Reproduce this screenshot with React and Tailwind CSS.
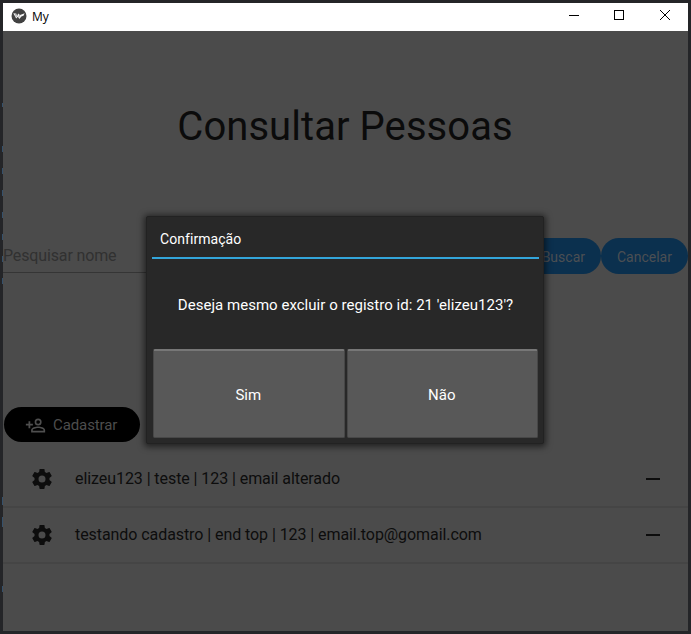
import React from "react";

const people = [
  "elizeu123 | teste | 123 | email alterado",
  "testando cadastro | end top | 123 | email.top@gomail.com",
];

// Slivers of the editor that show past the window's left border.
const specks = [
  { top: 103, height: 4 },
  { top: 146, height: 6 },
  { top: 168, height: 6 },
  { top: 190, height: 6 },
  { top: 212, height: 6 },
  { top: 234, height: 6 },
  { top: 256, height: 6 },
  { top: 278, height: 6 },
  { top: 497, height: 8 },
  { top: 517, height: 10 },
  { top: 586, height: 6 },
];

function TitleBar() {
  return (
    <header className="flex h-7 items-center bg-white pl-2">
      <svg width="16" height="16" viewBox="0 0 16 16" className="relative -top-px">
        <circle cx="8" cy="8" r="7.5" fill="#414141" />
        <path d="M2.3 5.2 5.2 5.6 6.1 8 7.2 5.6 9 7 13.7 5.2 12.5 7.7 10.4 8.5 8.4 11 6.8 8.8 5.2 10.5Z" fill="#f4f4f4" />
        <path d="M4.3 5.4 5.4 9M8.8 7.2 7.6 9.2" stroke="#777" strokeWidth=".6" />
      </svg>
      <span className="ml-[5px] -mt-px font-['Open_Sans',sans-serif] text-[12px] leading-4 text-black">My</span>
      <svg className="ml-auto" width="138" height="28" viewBox="0 0 138 28" fill="none" stroke="#000" shapeRendering="crispEdges">
        <path d="M19 12.5H29" />
        <rect x="64.5" y="7.5" width="9" height="9" />
        <path d="M110 7 120 17M120 7 110 17" shapeRendering="auto" />
      </svg>
    </header>
  );
}

function Gear() {
  return (
    <svg width="24" height="24" viewBox="0 0 24 24" fill="#0d0d0d" className="-ml-px mr-px">
      <path d="M12,15.5A3.5,3.5 0 0,1 8.5,12A3.5,3.5 0 0,1 12,8.5A3.5,3.5 0 0,1 15.5,12A3.5,3.5 0 0,1 12,15.5M19.43,12.97C19.47,12.65 19.5,12.33 19.5,12C19.5,11.67 19.47,11.34 19.43,11L21.54,9.37C21.73,9.22 21.78,8.95 21.66,8.73L19.66,5.27C19.54,5.05 19.27,4.96 19.05,5.05L16.56,6.05C16.04,5.66 15.5,5.32 14.87,5.07L14.5,2.42C14.46,2.18 14.25,2 14,2H10C9.75,2 9.54,2.18 9.5,2.42L9.13,5.07C8.5,5.32 7.96,5.66 7.44,6.05L4.95,5.05C4.73,4.96 4.46,5.05 4.34,5.27L2.34,8.73C2.21,8.95 2.27,9.22 2.46,9.37L4.57,11C4.53,11.34 4.5,11.67 4.5,12C4.5,12.33 4.53,12.65 4.57,12.97L2.46,14.63C2.27,14.78 2.21,15.05 2.34,15.27L4.34,18.73C4.46,18.95 4.73,19.03 4.95,18.95L7.44,17.94C7.96,18.34 8.5,18.68 9.13,18.93L9.5,21.58C9.54,21.82 9.75,22 10,22H14C14.25,22 14.46,21.82 14.5,21.58L14.87,18.93C15.5,18.67 16.04,18.34 16.56,17.94L19.05,18.95C19.27,19.03 19.54,18.95 19.66,18.73L21.66,15.27C21.78,15.05 21.73,14.78 21.54,14.63L19.43,12.97Z" />
    </svg>
  );
}

function AddPerson() {
  return (
    <svg width="21" height="21" viewBox="0 0 24 24" fill="#4f4f4f">
      <path d="M15,4A4,4 0 0,0 11,8A4,4 0 0,0 15,12A4,4 0 0,0 19,8A4,4 0 0,0 15,4M15,5.9C16.16,5.9 17.1,6.84 17.1,8C17.1,9.16 16.16,10.1 15,10.1A2.1,2.1 0 0,1 12.9,8A2.1,2.1 0 0,1 15,5.9M4,7V10H1V12H4V15H6V12H9V10H6V7H4M15,13C12.33,13 7,14.33 7,17V20H23V17C23,14.33 17.67,13 15,13M15,14.9C17.97,14.9 21.1,16.36 21.1,17V18.1H8.9V17C8.9,16.36 12,14.9 15,14.9Z" />
    </svg>
  );
}

function Dialog() {
  return (
    <section className="absolute left-[143px] top-[213px] flex h-[228px] w-[398px] flex-col rounded-[2px] border border-[#222] bg-[#282828] pb-[5px] pl-[5px] pr-1 text-white shadow-[0_1px_6px_2px_rgba(0,0,0,0.55)]">
      <h2 className="h-[42px] border-b-2 border-[#33a5da] pl-2 pt-3 text-[14px] leading-5 tracking-[0.06px]">Confirmação</h2>
      <p className="flex flex-1 items-center justify-center pt-[3px] text-[15px] tracking-[0.03px]">Deseja mesmo excluir o registro id: 21 'elizeu123'?</p>
      <div className="flex gap-0.5 px-px">
        <button className="h-[89px] flex-1 rounded-[2px] border border-t-2 border-[#474747] border-t-[#777] bg-[#585858] pr-px pt-0.5 text-[15px]">Sim</button>
        <button className="h-[89px] flex-1 rounded-[2px] border border-t-2 border-[#474747] border-t-[#777] bg-[#585858] pr-px pt-0.5 text-[15px]">Não</button>
      </div>
    </section>
  );
}

export default function App() {
  return (
    <div className="relative h-[634px] w-[691px] overflow-hidden bg-[#242528] p-[3px] font-[Roboto,sans-serif]">
      {specks.map((s) => (
        <i key={s.top} className="absolute left-[2px] w-px bg-[#36516b]" style={s} />
      ))}
      <div className="relative flex h-[628px] w-[685px] flex-col bg-[#4b4b4b]">
        <TitleBar />
        <h1 className="mt-[72px] pr-px text-center text-[40px] leading-12 tracking-[0.06px] text-[#0b0b0b]">Consultar Pessoas</h1>
        <div className="mt-[87px] flex h-9">
          <div className="h-[35px] flex-1 border-b border-[#353535] pt-2 text-[16px] leading-5 tracking-[-0.14px] text-[#313131]">Pesquisar nome</div>
          <button className="h-9 w-[76px] rounded-full bg-[#0b304e] pr-4 pt-0.5 text-right text-[14px] text-[#4b4f53]">Buscar</button>
          <button className="h-9 w-[87px] rounded-full bg-[#0b304e] pt-0.5 text-center text-[14px] text-[#4b4f53]">Cancelar</button>
        </div>
        <button className="ml-px mt-[133px] flex h-[35px] w-[136px] items-center rounded-full bg-black pl-[21px] pt-px text-[15px] text-[#4d4d4d]">
          <AddPerson />
          <span className="ml-[7px] tracking-[-0.1px]">Cadastrar</span>
        </button>
        <ul className="mt-[10px]">
          {people.map((p) => (
            <li key={p} className="flex h-14 items-center border-b-2 border-[#454545] pl-7 pr-7 text-[16px] text-[#0d0d0d]">
              <Gear />
              <span className="ml-5 tracking-[-0.07px]">{p}</span>
              <i className="ml-auto h-0.5 w-3.5 bg-[#0d0d0d]" />
            </li>
          ))}
        </ul>
        <Dialog />
      </div>
    </div>
  );
}
